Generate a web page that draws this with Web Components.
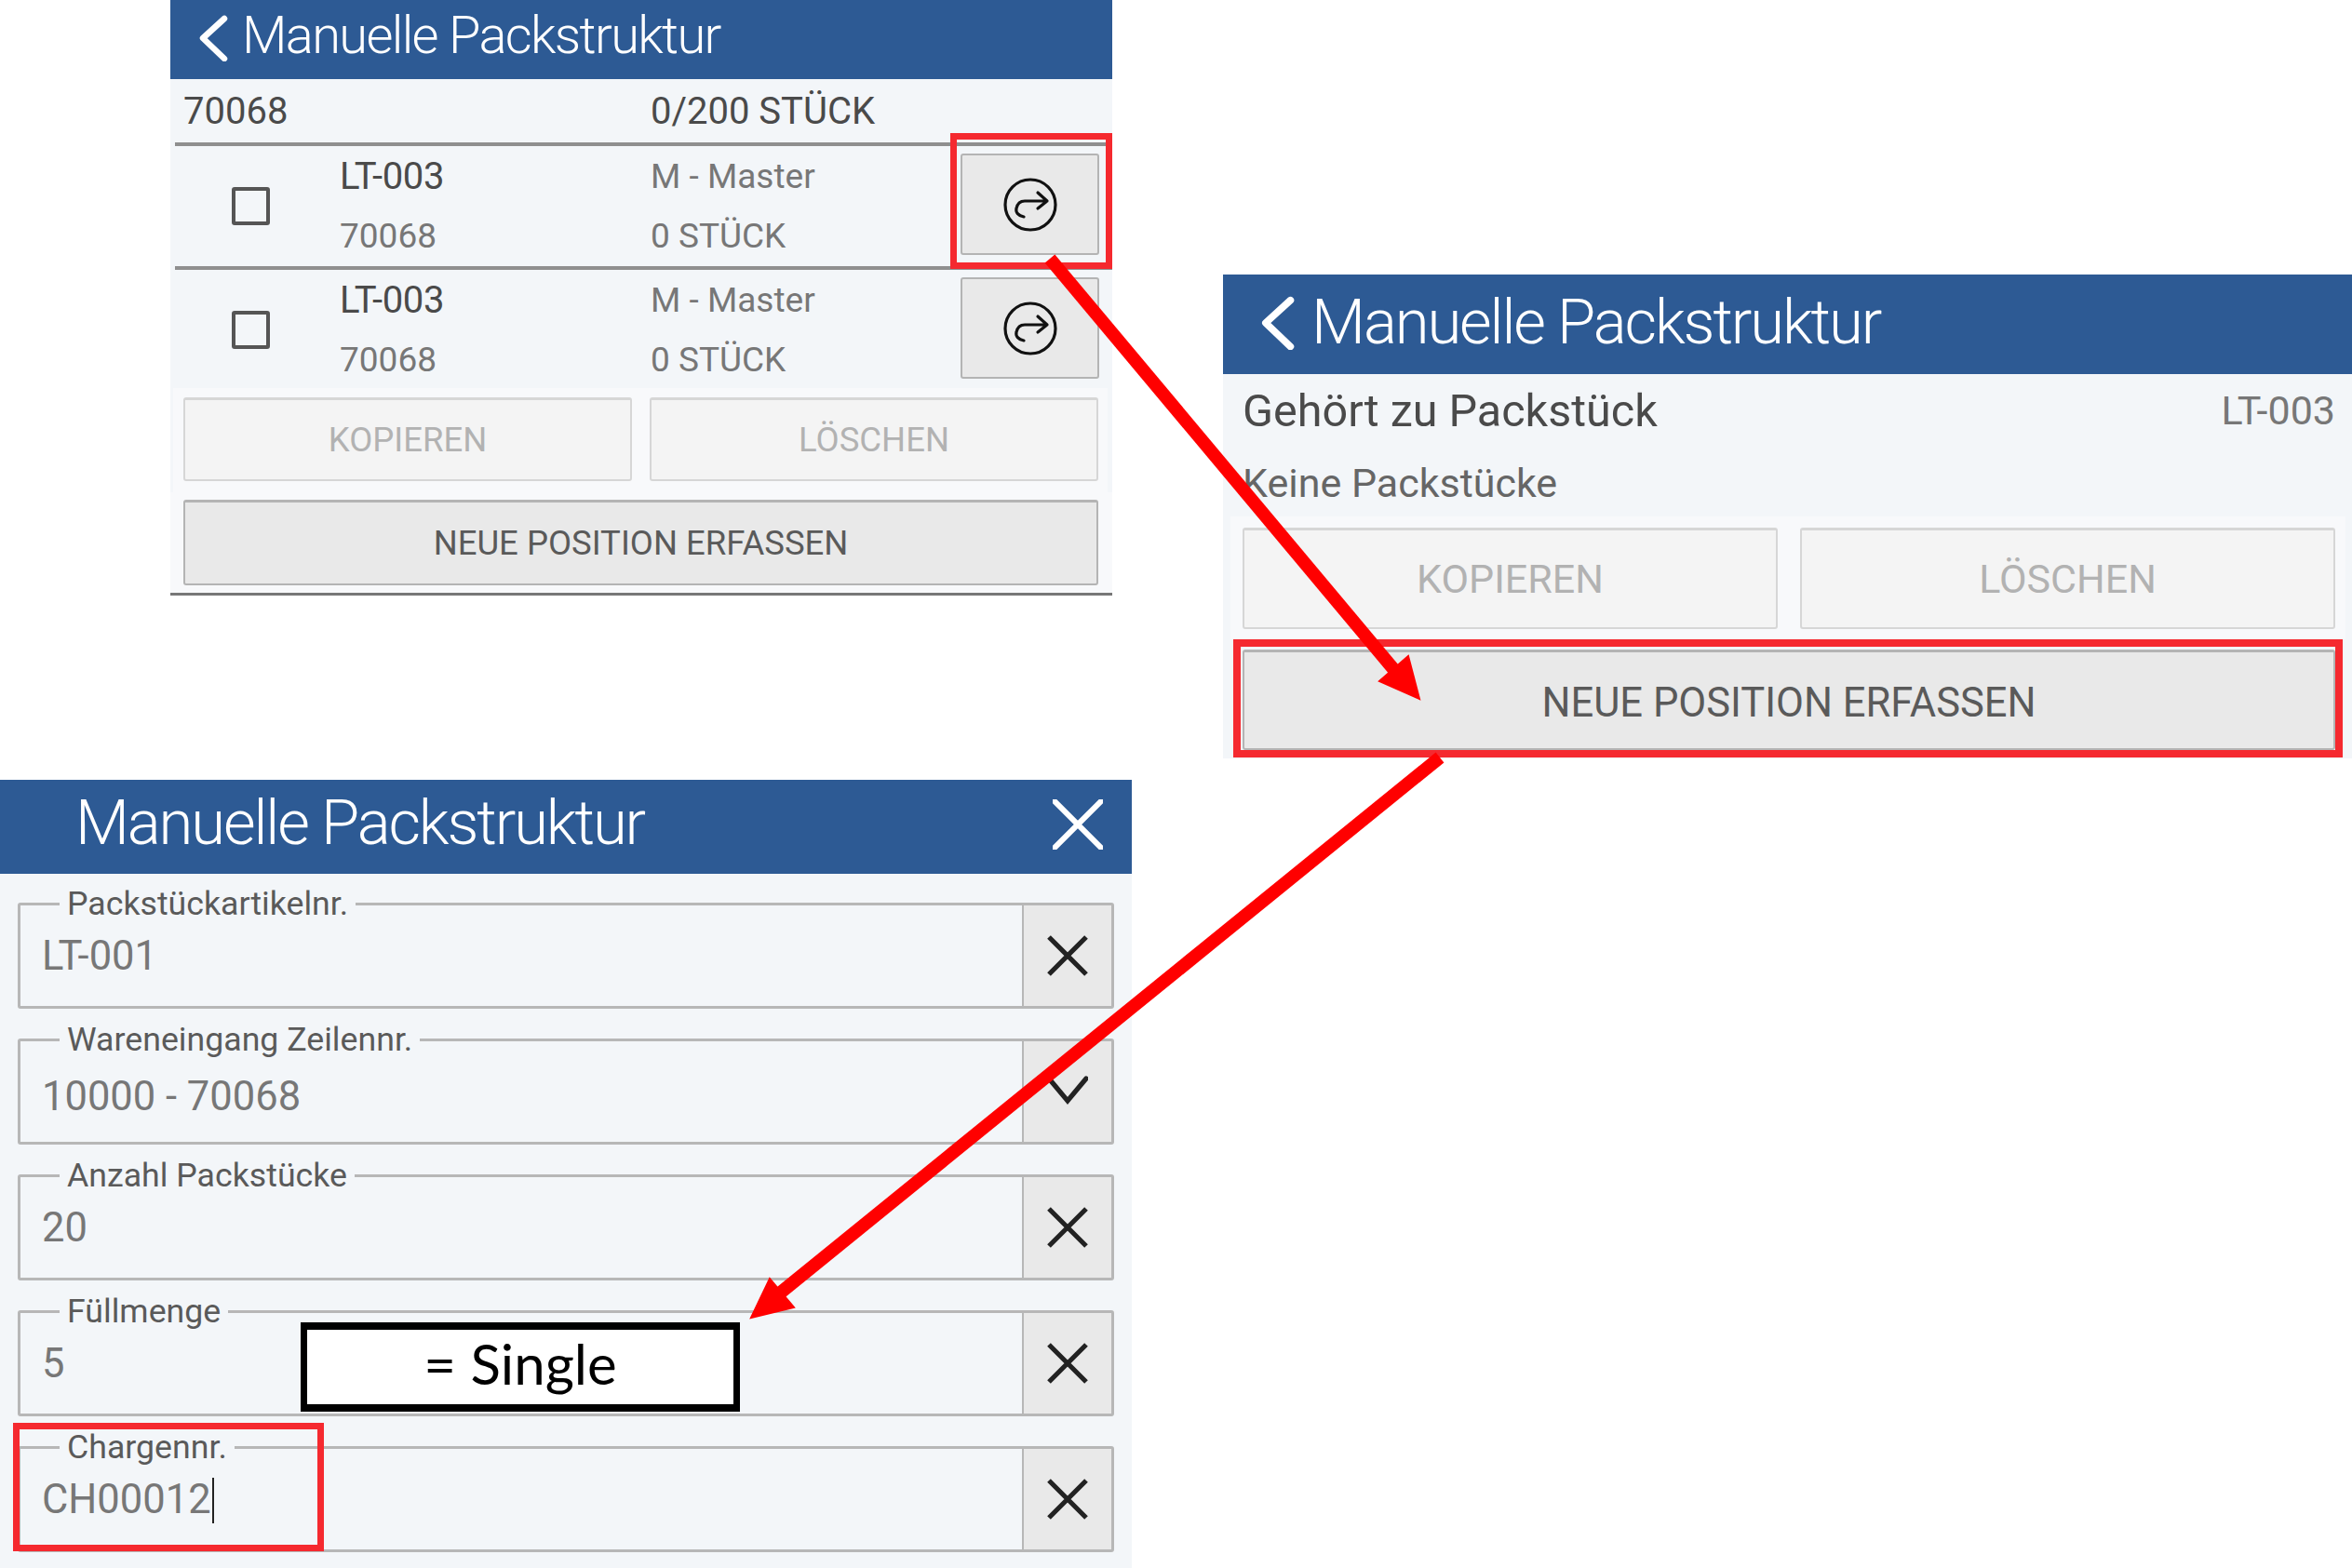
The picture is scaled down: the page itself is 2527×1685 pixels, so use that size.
<!DOCTYPE html>
<html lang="de">
<head>
<meta charset="utf-8">
<title>Manuelle Packstruktur</title>
<style>
  html, body { margin: 0; background: #fff; }
  body { position: relative; width: 2527px; height: 1685px; overflow: hidden; font-family: Roboto, "Liberation Sans", sans-serif; }
</style>
</head>
<body>
<pk-panel style="left:183px;top:0;width:1012px;height:640px;border-bottom:3px solid #777;box-sizing:border-box">
  <pk-header icon="back" style="height:85px;font-size:56px;letter-spacing:-1.65px;padding-left:30px;gap:15px;--lift:10px;--chev:50px">Manuelle Packstruktur</pk-header>
  <pk-summary><span>70068</span><span>0/200 STÜCK</span></pk-summary>
  <pk-row name="LT-003" code="70068" kind="M - Master" qty="0 STÜCK"></pk-row>
  <pk-row name="LT-003" code="70068" kind="M - Master" qty="0 STÜCK" style="height:131px"></pk-row>
  <pk-actions style="height:112px;font-size:36.5px;padding:10px 10px 12px 11px;gap:19px;margin:0 5px 0 3px">
    <pk-button disabled>KOPIEREN</pk-button>
    <pk-button disabled>LÖSCHEN</pk-button>
  </pk-actions>
  <pk-actions style="height:108px;font-size:36.5px;padding:8px 15px 8px 14px">
    <pk-button>NEUE POSITION ERFASSEN</pk-button>
  </pk-actions>
</pk-panel>

<pk-panel style="left:1314px;top:295px;width:1213px;height:520px">
  <pk-header icon="back" style="height:107px;font-size:67px;letter-spacing:-2.15px;padding-left:40px;gap:18px;--lift:6px;--chev:58px">Manuelle Packstruktur</pk-header>
  <pk-info label="Gehört zu Packstück" value="LT-003" note="Keine Packstücke"></pk-info>
  <pk-actions style="height:132px;font-size:43px;padding:12px 11px 11px 13px;gap:24px;margin:0 7px 0 8px">
    <pk-button disabled>KOPIEREN</pk-button>
    <pk-button disabled>LÖSCHEN</pk-button>
  </pk-actions>
  <pk-actions style="height:126px;font-size:43.5px;padding:11px 18px 7px 21px;background:#f3f6f9">
    <pk-button style="padding-top:5px">NEUE POSITION ERFASSEN</pk-button>
  </pk-actions>
</pk-panel>

<pk-panel style="left:0;top:838px;width:1216px;height:847px">
  <pk-header icon="close" style="height:101px;font-size:67px;letter-spacing:-2.15px;padding-left:81px;--lift:10px">Manuelle Packstruktur</pk-header>
  <pk-form>
    <pk-field label="Packstückartikelnr." value="LT-001"></pk-field>
    <pk-field label="Wareneingang Zeilennr." value="10000 - 70068" icon="down" offset="5"></pk-field>
    <pk-field label="Anzahl Packstücke" value="20"></pk-field>
    <pk-field label="Füllmenge" value="5"></pk-field>
    <pk-field label="Chargennr." value="CH00012" caret></pk-field>
  </pk-form>
</pk-panel>

<pk-note style="left:323px;top:1421px;width:472px;height:96px">= Single</pk-note>
<pk-frame style="left:1021px;top:143px;width:174px;height:146px"></pk-frame>
<pk-frame style="left:1325px;top:687px;width:1192px;height:127px;border-width:8px"></pk-frame>
<pk-frame style="left:14px;top:1529px;width:334px;height:138px"></pk-frame>
<pk-arrows></pk-arrows>

<template id="panel-tpl">
  <style>
    :host { position: absolute; display: flex; flex-direction: column; background: #f3f6f9; color: #555; }
  </style>
  <slot></slot>
</template>

<template id="header-tpl">
  <style>
    :host { display: flex; align-items: center; background: #2d5a94; color: #fff; font-weight: 300; flex: none; box-sizing: border-box; }
    svg { flex: none; stroke: #fff; fill: none; stroke-linecap: round; stroke-linejoin: round; }
    #back { height: var(--chev, 50px); width: auto; margin-bottom: 4px; }
    .grow { flex: 1; padding-bottom: var(--lift, 0); }
    #close { margin-right: 31px; margin-bottom: 6px; }
  </style>
  <svg id="back" viewBox="0 0 32 50"><path d="M28 4 L5 25 L28 47" stroke-width="6.5"/></svg>
  <span class="grow"><slot></slot></span>
  <svg id="close" width="54" height="54" viewBox="0 0 54 54"><path d="M2 2 L52 52 M52 2 L2 52" stroke-width="6"/></svg>
</template>

<template id="summary-tpl">
  <style>
    :host { display: grid; grid-template-columns: 502px 1fr; align-items: center; height: 69px; padding-left: 14px; font-size: 40px; color: #4a4a4a; }
  </style>
  <slot></slot>
</template>

<template id="row-tpl">
  <style>
    :host { display: grid; grid-template-columns: 182px 334px 333px 148px; align-items: center; height: 133px; box-sizing: border-box; margin-left: 5px; border-top: 4px solid #8f8f8f; font-size: 37px; line-height: 64px; padding-right: 10px; }
    .check { justify-self: center; width: 33px; height: 33px; border: 4px solid #555; border-radius: 3px; margin-left: -20px; }
    .col { margin-left: -5px; padding-top: 1px; }
    .top { color: #4a4a4a; font-size: 40px; letter-spacing: -0.3px; }
    .low { color: #777; }
    .go { box-sizing: border-box; margin-left: -5px; width: 149px; height: 109px; display: flex; align-items: center; justify-content: center; background: #e9e9e9; border: 2px solid #b4b4b4; border-radius: 3px; align-self: start; margin-top: 8px; }
  </style>
  <div class="check"></div>
  <div class="col"><div class="top" id="name"></div><div class="low" id="code"></div></div>
  <div class="col"><div class="low" id="kind"></div><div class="low" id="qty"></div></div>
  <div class="go">
    <svg width="60" height="60" viewBox="-30 -30 60 60" fill="none" stroke="#111" stroke-width="3.2" stroke-linecap="round" stroke-linejoin="round">
      <circle r="27"/>
      <path d="M-7 13 C-13 12 -16 8 -15 4 C-14 -1 -11 -4 -6 -4 L18 -4 M8 -13 L18 -4 L8 4"/>
    </svg>
  </div>
</template>

<template id="actions-tpl">
  <style>
    :host { display: flex; flex: none; box-sizing: border-box; background: #f8f9fb; }
  </style>
  <slot></slot>
</template>

<template id="button-tpl">
  <style>
    :host { flex: 1; display: flex; align-items: center; justify-content: center; box-sizing: border-box; background: #e9e9e9; border: 2px solid #b4b4b4; border-top-width: 3px; border-radius: 3px; color: #5a5a5a; }
    :host([disabled]) { background: #f4f4f4; border-color: #d6d6d6; color: #b2b2b2; }
  </style>
  <slot></slot>
</template>

<template id="info-tpl">
  <style>
    :host { display: block; height: 153px; padding: 0 18px 0 21px; flex: none; }
    .line { display: flex; justify-content: space-between; align-items: center; height: 78px; font-size: 48.5px; color: #4a4a4a; }
    .line span + span { font-size: 43px; color: #777; }
    .note { font-size: 43px; color: #666; line-height: 78px; }
  </style>
  <div class="line"><span id="label"></span><span id="value"></span></div>
  <div class="note" id="note"></div>
</template>

<template id="form-tpl">
  <style>
    :host { display: flex; flex-direction: column; gap: 32px; padding: 31px 19px 0 19px; }
  </style>
  <slot></slot>
</template>

<template id="field-tpl">
  <style>
    :host { position: relative; display: flex; height: 114px; box-sizing: border-box; border: 3px solid #b7b7b7; border-radius: 3px; }
    .legend { position: absolute; left: 42px; top: -23px; padding: 0 8px; background: #f3f6f9; font-size: 35.7px; line-height: 42px; color: #5a5a5a; }
    .text { flex: 1; padding-left: 23px; font-size: 43.5px; line-height: 44px; color: #777; padding-top: 33px; display: flex; align-items: flex-start; }
    .caret { display: inline-block; width: 2px; height: 49px; background: #222; margin-left: 1px; margin-top: -2px; }
    .side { flex: none; width: 94px; background: #e9e9e9; border-left: 2px solid #b7b7b7; display: flex; align-items: center; justify-content: center; }
  </style>
  <div class="legend" id="legend"></div>
  <div class="text"><span id="value"></span><span class="caret" id="caret"></span></div>
  <div class="side">
    <svg id="x" width="44" height="44" viewBox="0 0 44 44" fill="none" stroke="#222" stroke-width="5.2"><path d="M2 2 L42 42 M42 2 L2 42"/></svg>
    <svg id="down" width="44" height="44" viewBox="0 0 44 44" fill="none" stroke="#222" stroke-width="5.2" stroke-linecap="round"><path d="M2 8 L22 32 L42 8"/></svg>
  </div>
</template>

<template id="note-tpl">
  <style>
    :host { position: absolute; display: flex; align-items: center; justify-content: center; box-sizing: border-box; background: #fff; border: 8px solid #000; border-left-width: 7px; border-right-width: 7px; padding-bottom: 9px; font-family: Lato, "Noto Sans", sans-serif; font-size: 60px; color: #000; }
  </style>
  <slot></slot>
</template>

<template id="frame-tpl">
  <style>
    :host { position: absolute; display: block; box-sizing: border-box; border: 7px solid #f5292f; }
  </style>
</template>

<template id="arrows-tpl">
  <style>
    :host { position: absolute; left: 0; top: 0; display: block; width: 2527px; height: 1685px; pointer-events: none; }
  </style>
  <svg width="2527" height="1685" viewBox="0 0 2527 1685">
    <g fill="#f00" stroke="#f00">
      <path d="M1128 278 L1498 720" stroke-width="14" fill="none"/>
      <path d="M1525 751 L1513 705 L1482 732 Z" stroke-width="2"/>
      <path d="M1547 814 L835 1392" stroke-width="14" fill="none"/>
      <path d="M807 1416 L827 1374 L853 1405 Z" stroke-width="2"/>
    </g>
  </svg>
</template>

<script>
function shadow(el, id) {
  var root = el.attachShadow({ mode: "open" });
  root.appendChild(document.getElementById(id).content.cloneNode(true));
  return root;
}

class PkPanel extends HTMLElement {
  constructor() { super(); shadow(this, "panel-tpl"); }
}

class PkHeader extends HTMLElement {
  constructor() { super(); this.root = shadow(this, "header-tpl"); }
  connectedCallback() {
    var icon = this.getAttribute("icon");
    this.root.querySelector(icon == "back" ? "#close" : "#back").remove();
  }
}

class PkSummary extends HTMLElement {
  constructor() { super(); shadow(this, "summary-tpl"); }
}

class PkRow extends HTMLElement {
  constructor() { super(); this.root = shadow(this, "row-tpl"); }
  connectedCallback() {
    ["name", "code", "kind", "qty"].forEach((k) => {
      this.root.querySelector("#" + k).textContent = this.getAttribute(k);
    });
  }
}

class PkActions extends HTMLElement {
  constructor() { super(); shadow(this, "actions-tpl"); }
}

class PkButton extends HTMLElement {
  constructor() { super(); shadow(this, "button-tpl"); }
}

class PkInfo extends HTMLElement {
  constructor() { super(); this.root = shadow(this, "info-tpl"); }
  connectedCallback() {
    ["label", "value", "note"].forEach((k) => {
      this.root.querySelector("#" + k).textContent = this.getAttribute(k);
    });
  }
}

class PkForm extends HTMLElement {
  constructor() { super(); shadow(this, "form-tpl"); }
}

class PkField extends HTMLElement {
  constructor() { super(); this.root = shadow(this, "field-tpl"); }
  connectedCallback() {
    this.root.querySelector("#legend").textContent = this.getAttribute("label");
    this.root.querySelector("#value").textContent = this.getAttribute("value");
    if (!this.hasAttribute("caret")) this.root.querySelector("#caret").remove();
    if (this.hasAttribute("offset")) {
      this.root.querySelector(".text").style.paddingTop = 33 + Number(this.getAttribute("offset")) + "px";
    }
    this.root.querySelector(this.getAttribute("icon") == "down" ? "#x" : "#down").remove();
  }
}

class PkNote extends HTMLElement {
  constructor() { super(); shadow(this, "note-tpl"); }
}

class PkFrame extends HTMLElement {
  constructor() { super(); shadow(this, "frame-tpl"); }
}

class PkArrows extends HTMLElement {
  constructor() { super(); shadow(this, "arrows-tpl"); }
}

customElements.define("pk-panel", PkPanel);
customElements.define("pk-header", PkHeader);
customElements.define("pk-summary", PkSummary);
customElements.define("pk-row", PkRow);
customElements.define("pk-actions", PkActions);
customElements.define("pk-button", PkButton);
customElements.define("pk-info", PkInfo);
customElements.define("pk-form", PkForm);
customElements.define("pk-field", PkField);
customElements.define("pk-note", PkNote);
customElements.define("pk-frame", PkFrame);
customElements.define("pk-arrows", PkArrows);
</script>
</body>
</html>
